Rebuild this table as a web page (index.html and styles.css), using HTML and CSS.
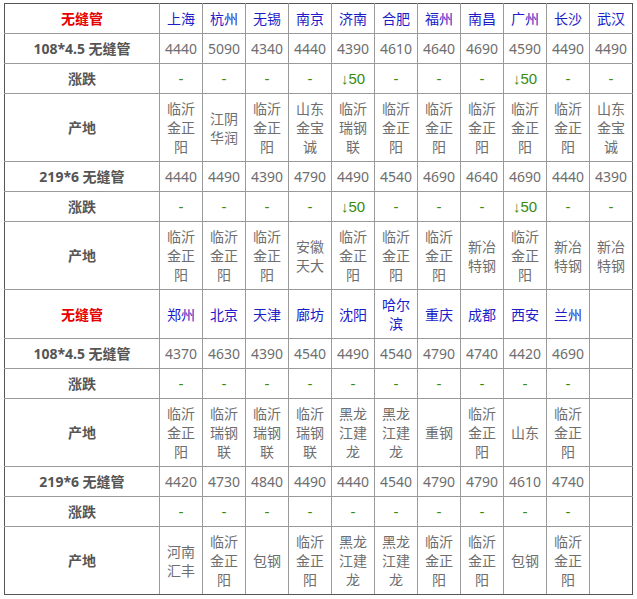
FILE: index.html
```html
<!DOCTYPE html>
<html>
<head>
<meta charset="utf-8">
<link rel="stylesheet" href="styles.css">
</head>
<body>
<div class="wrap">
<table class="price">
<colgroup>
<col class="c-label">
<col class="c"><col class="c"><col class="c"><col class="c"><col class="c"><col class="c"><col class="c"><col class="c"><col class="c"><col class="c"><col class="c">
</colgroup>
<tbody>
<tr class="head">
<td class="label red">无缝管</td>
<td class="city">上海</td><td class="city">杭州</td><td class="city">无锡</td><td class="city">南京</td><td class="city">济南</td><td class="city">合肥</td><td class="city">福州</td><td class="city">南昌</td><td class="city">广州</td><td class="city">长沙</td><td class="city">武汉</td>
</tr>
<tr>
<td class="label">108*4.5 无缝管</td>
<td>4440</td><td>5090</td><td>4340</td><td>4440</td><td>4390</td><td>4610</td><td>4640</td><td>4690</td><td>4590</td><td>4490</td><td>4490</td>
</tr>
<tr>
<td class="label">涨跌</td>
<td class="chg">-</td><td class="chg">-</td><td class="chg">-</td><td class="chg">-</td><td class="chg">↓50</td><td class="chg">-</td><td class="chg">-</td><td class="chg">-</td><td class="chg">↓50</td><td class="chg">-</td><td class="chg">-</td>
</tr>
<tr>
<td class="label">产地</td>
<td>临沂金正阳</td><td>江阴华润</td><td>临沂金正阳</td><td>山东金宝诚</td><td>临沂瑞钢联</td><td>临沂金正阳</td><td>临沂金正阳</td><td>临沂金正阳</td><td>临沂金正阳</td><td>临沂金正阳</td><td>山东金宝诚</td>
</tr>
<tr>
<td class="label">219*6 无缝管</td>
<td>4440</td><td>4490</td><td>4390</td><td>4790</td><td>4490</td><td>4540</td><td>4690</td><td>4640</td><td>4690</td><td>4440</td><td>4390</td>
</tr>
<tr>
<td class="label">涨跌</td>
<td class="chg">-</td><td class="chg">-</td><td class="chg">-</td><td class="chg">-</td><td class="chg">↓50</td><td class="chg">-</td><td class="chg">-</td><td class="chg">-</td><td class="chg">↓50</td><td class="chg">-</td><td class="chg">-</td>
</tr>
<tr>
<td class="label">产地</td>
<td>临沂金正阳</td><td>临沂金正阳</td><td>临沂金正阳</td><td>安徽天大</td><td>临沂金正阳</td><td>临沂金正阳</td><td>临沂金正阳</td><td>新冶特钢</td><td>临沂金正阳</td><td>新冶特钢</td><td>新冶特钢</td>
</tr>
<tr class="head">
<td class="label red">无缝管</td>
<td class="city">郑州</td><td class="city">北京</td><td class="city">天津</td><td class="city">廊坊</td><td class="city">沈阳</td><td class="city">哈尔滨</td><td class="city">重庆</td><td class="city">成都</td><td class="city">西安</td><td class="city">兰州</td><td></td>
</tr>
<tr>
<td class="label">108*4.5 无缝管</td>
<td>4370</td><td>4630</td><td>4390</td><td>4540</td><td>4490</td><td>4540</td><td>4790</td><td>4740</td><td>4420</td><td>4690</td><td></td>
</tr>
<tr>
<td class="label">涨跌</td>
<td class="chg">-</td><td class="chg">-</td><td class="chg">-</td><td class="chg">-</td><td class="chg">-</td><td class="chg">-</td><td class="chg">-</td><td class="chg">-</td><td class="chg">-</td><td class="chg">-</td><td></td>
</tr>
<tr>
<td class="label">产地</td>
<td>临沂金正阳</td><td>临沂瑞钢联</td><td>临沂瑞钢联</td><td>临沂瑞钢联</td><td>黑龙江建龙</td><td>黑龙江建龙</td><td>重钢</td><td>临沂金正阳</td><td>山东</td><td>临沂金正阳</td><td></td>
</tr>
<tr>
<td class="label">219*6 无缝管</td>
<td>4420</td><td>4730</td><td>4840</td><td>4490</td><td>4440</td><td>4540</td><td>4790</td><td>4790</td><td>4610</td><td>4740</td><td></td>
</tr>
<tr>
<td class="label">涨跌</td>
<td class="chg">-</td><td class="chg">-</td><td class="chg">-</td><td class="chg">-</td><td class="chg">-</td><td class="chg">-</td><td class="chg">-</td><td class="chg">-</td><td class="chg">-</td><td class="chg">-</td><td></td>
</tr>
<tr>
<td class="label">产地</td>
<td>河南汇丰</td><td>临沂金正阳</td><td>包钢</td><td>临沂金正阳</td><td>黑龙江建龙</td><td>黑龙江建龙</td><td>临沂金正阳</td><td>临沂金正阳</td><td>包钢</td><td>临沂金正阳</td><td></td>
</tr>
</tbody>
</table>
</div>
</body>
</html>
```

FILE: styles.css
```css
html, body {
  margin: 0;
  padding: 0;
  background: #fff;
}

.wrap {
  padding: 3px 0 0 4px;
}

.price {
  border-collapse: collapse;
  table-layout: fixed;
  width: 627px;
  font-family: "Noto Sans", "Noto Sans CJK SC", sans-serif;
  font-size: 14px;
  color: #6e6e6e;
}

.c-label {
  width: 155px;
}

.c {
  width: 43px;
}

.price td {
  border: 1px solid #9a9a9a;
  padding: 5px 5px;
  line-height: 19px;
  text-align: center;
  vertical-align: middle;
}

.price tr:first-child td {
  border-top-color: #555;
}

.price tr:last-child td {
  border-bottom-color: #555;
}

.price td:first-child {
  border-left-color: #555;
}

.price td:last-child {
  border-right-color: #555;
}

.price td.label {
  font-weight: bold;
  color: #555;
  white-space: nowrap;
}

.price td.red {
  color: #e60000;
}

.price td.city {
  color: #1c1cc8;
}

.price td.chg {
  color: #3a8a10;
  font-family: "Liberation Sans", "Noto Sans", "Noto Sans CJK SC", sans-serif;
  font-size: 15px;
}
```
